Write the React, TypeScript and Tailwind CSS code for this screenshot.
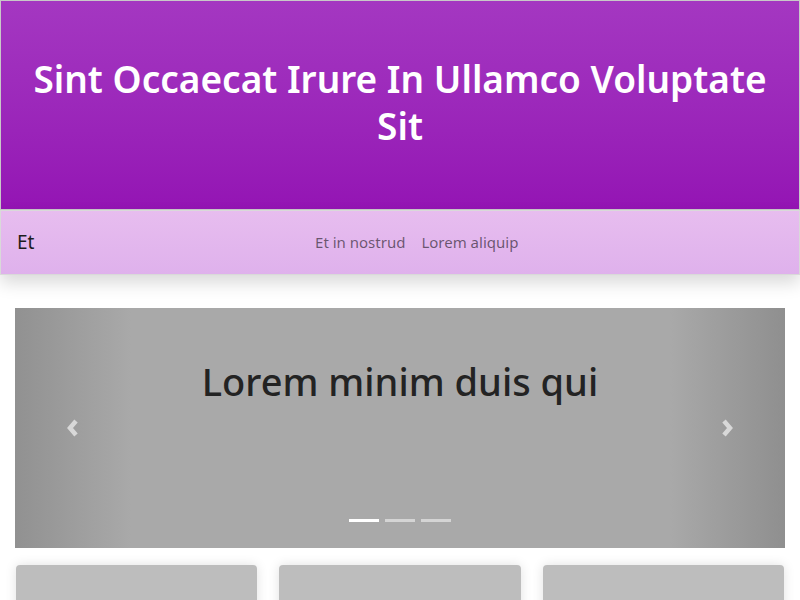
import React from 'react';

const slides = ['Lorem minim duis qui', 'Sed do eiusmod', 'Ut enim ad minim'];

const App: React.FC = () => {
  return (
    <div className="min-h-[600px] bg-white font-['Noto_Sans',sans-serif] text-[#212529]">
      {/* header */}
      <header className="h-[210px] border border-[#c8c8c8] bg-gradient-to-b from-[#a437c1] to-[#9414b4] flex items-center justify-center px-3 pb-[6px]">
        <h1 className="text-center text-white text-[37px] leading-[47px] font-semibold">
          Sint Occaecat Irure In Ullamco Voluptate Sit
        </h1>
      </header>

      {/* navbar */}
      <nav className="relative h-[65px] border border-[#d9d9d9] bg-gradient-to-b from-[#e7bdef] to-[#dfb1ec] shadow-[0_8px_16px_rgba(0,0,0,0.15)] flex items-center px-4">
        <span className="text-[19px] text-[#1d1d1d]">Et</span>
        <div className="flex-1 flex justify-center gap-4 text-[15px] text-black/55 pl-[16px]">
          <span>Et in nostrud</span>
          <span>Lorem aliquip</span>
        </div>
      </nav>

      <div className="px-[15px] pt-[33px]">
        {/* carousel */}
        <div className="relative h-[240px] bg-[#a9a9a9] flex justify-between">
          <div className="w-[15%] bg-gradient-to-r from-[#919191] to-[#a9a9a9] flex items-center justify-center">
            <svg width="16" height="20" viewBox="0 0 16 20">
              <path d="M11 3 L5 10 L11 17" stroke="#d8d8d8" strokeWidth="4.5" fill="none" />
            </svg>
          </div>
          <div className="flex-1 flex flex-col items-center">
            <h2 className="mt-[50px] text-[38px] leading-[46px] font-medium text-[#232323]">{slides[0]}</h2>
            <div className="mt-auto mb-[26px] flex gap-[6px]">
              {slides.map((s, i) => (
                <span key={s} className={i === 0 ? 'w-[30px] h-[3px] bg-white' : 'w-[30px] h-[3px] bg-white/50'} />
              ))}
            </div>
          </div>
          <div className="w-[15%] bg-gradient-to-l from-[#8f8f8f] to-[#a9a9a9] flex items-center justify-center">
            <svg width="16" height="20" viewBox="0 0 16 20">
              <path d="M5 3 L11 10 L5 17" stroke="#d8d8d8" strokeWidth="4.5" fill="none" />
            </svg>
          </div>
        </div>

        {/* cards */}
        <div className="grid grid-cols-3 gap-[22px] mt-[17px] px-px">
          {[0, 1, 2].map((i) => (
            <div key={i} className="h-[120px] rounded bg-[#bdbdbd] shadow-[0_0_12px_rgba(0,0,0,0.12)]" />
          ))}
        </div>
      </div>
    </div>
  );
};

export default App;
